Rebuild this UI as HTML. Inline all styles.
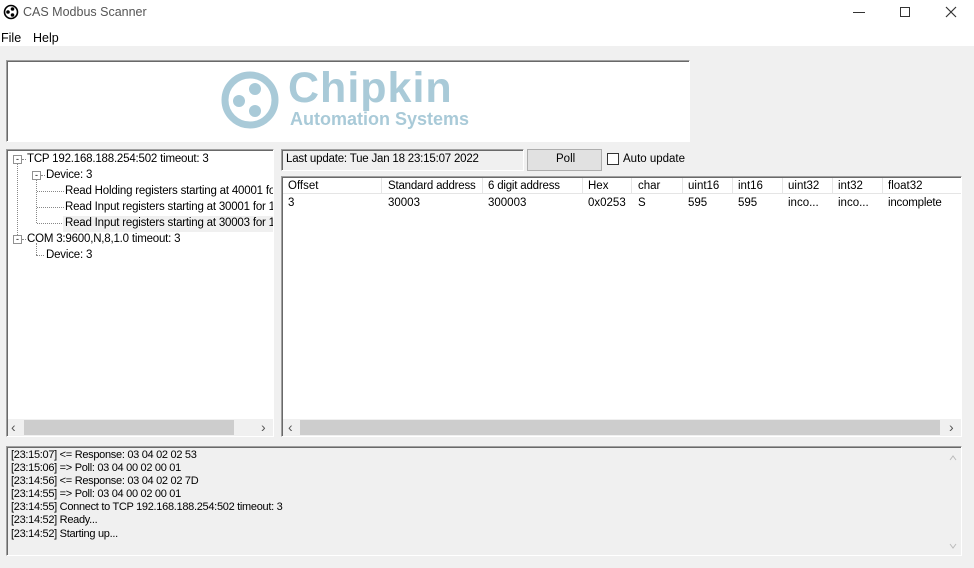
<!DOCTYPE html>
<html><head><style>
*{margin:0;padding:0;box-sizing:border-box}
body{width:974px;height:568px;background:#f0f0f0;font-family:"Liberation Sans",sans-serif;font-size:11.5px;color:#000;position:relative;overflow:hidden}
.a{position:absolute}
.sunk{border:1px solid #a0a0a0;border-right-color:#fff;border-bottom-color:#fff;box-shadow:inset 1px 1px 0 #696969}
.t{position:absolute;white-space:nowrap}
.dot{border-left:1px dotted #888}
.hd{border-top:1px dotted #888}
.box{position:absolute;width:9px;height:9px;border:1px solid #919191;background:#fff;font-size:9px;line-height:6px;text-align:center;color:#000}
.tr{letter-spacing:-0.2px}
</style></head><body>
<div class="a" style="left:0;top:0;width:974px;height:46px;background:#fff"></div>
<svg class="a" style="left:3px;top:4px" width="16" height="16" viewBox="0 0 16 16"><circle cx="8" cy="8" r="6.5" fill="none" stroke="#000" stroke-width="1.6"/><circle cx="9.5" cy="5" r="1.8"/><circle cx="5" cy="8" r="1.8"/><circle cx="9.5" cy="11" r="1.8"/></svg>
<div class="t" style="left:23px;top:5px;font-size:12.5px;color:#555">CAS Modbus Scanner</div>
<div class="a" style="left:853px;top:12px;width:12px;height:1px;background:#333"></div>
<div class="a" style="left:900px;top:7px;width:10px;height:10px;border:1px solid #333"></div>
<svg class="a" style="left:945px;top:6px" width="12" height="12" viewBox="0 0 12 12"><path d="M1 1L11 11M11 1L1 11" stroke="#333" stroke-width="1.2"/></svg>
<div class="t" style="left:1px;top:31px;font-size:12.5px">File</div>
<div class="t" style="left:33px;top:31px;font-size:12.5px">Help</div>

<div class="a sunk" style="left:6px;top:60px;width:684px;height:82px;background:#fff"></div>
<svg class="a" style="left:221px;top:71px" width="60" height="60" viewBox="0 0 60 60"><circle cx="29" cy="29" r="25" fill="none" stroke="#a9cad8" stroke-width="7"/><circle cx="34" cy="18" r="6" fill="#a9cad8"/><circle cx="18" cy="30" r="6" fill="#a9cad8"/><circle cx="34" cy="40" r="6" fill="#a9cad8"/></svg>
<div class="t" style="left:288px;top:64px;font-size:43px;font-weight:bold;color:#a9cad8;letter-spacing:1px">Chipkin</div>
<div class="t" style="left:290px;top:109px;font-size:18px;font-weight:bold;color:#a9cad8">Automation Systems</div>

<div class="a sunk" style="left:6px;top:149px;width:268px;height:288px;background:#fff"></div>
<div class="a dot" style="left:17px;top:163px;height:76px"></div>
<div class="a dot" style="left:36px;top:178px;height:45px"></div>
<div class="a hd" style="left:37px;top:191px;width:27px"></div>
<div class="a hd" style="left:37px;top:207px;width:27px"></div>
<div class="a hd" style="left:37px;top:223px;width:27px"></div>
<div class="a dot" style="left:36px;top:243px;height:12px"></div>
<div class="a hd" style="left:36px;top:255px;width:8px"></div>
<div class="a hd" style="left:22px;top:159px;width:4px"></div>
<div class="a hd" style="left:41px;top:175px;width:4px"></div>
<div class="a hd" style="left:22px;top:239px;width:4px"></div>
<div class="box" style="left:13px;top:155px">-</div>
<div class="box" style="left:32px;top:171px">-</div>
<div class="box" style="left:13px;top:235px">-</div>
<div class="t tr" style="left:27px;top:153px">TCP 192.168.188.254:502 timeout: 3</div>
<div class="t tr" style="left:46px;top:169px">Device: 3</div>
<div class="a tr" style="left:7px;top:185px;width:266px;height:48px;overflow:hidden">
<div class="t" style="left:58px;top:0px">Read Holding registers starting at 40001 for</div>
<div class="t" style="left:58px;top:16px">Read Input registers starting at 30001 for 1</div>
<div class="a" style="left:56px;top:31px;width:212px;height:16px;background:#f0f0f0"></div>
<div class="t" style="left:58px;top:32px">Read Input registers starting at 30003 for 1</div>
</div>
<div class="t tr" style="left:27px;top:233px">COM 3:9600,N,8,1.0 timeout: 3</div>
<div class="t tr" style="left:46px;top:249px">Device: 3</div>
<div class="a" style="left:8px;top:419px;width:265px;height:17px;background:#f0f0f0"></div>
<div class="a" style="left:24px;top:420px;width:210px;height:15px;background:#cdcdcd"></div>
<div class="t" style="left:11px;top:419px;color:#555;font-size:14px">&#8249;</div>
<div class="t" style="left:261px;top:419px;color:#555;font-size:14px">&#8250;</div>

<div class="a sunk" style="left:281px;top:149px;width:243px;height:22px;background:#f0f0f0"></div>
<div class="t tr" style="left:286px;top:153px">Last update: Tue Jan 18 23:15:07 2022</div>
<div class="a" style="left:527px;top:149px;width:75px;height:22px;background:#e1e1e1;border:1px solid #adadad"></div>
<div class="t" style="left:556px;top:153px">Poll</div>
<div class="a" style="left:607px;top:153px;width:12px;height:12px;background:#fff;border:1px solid #333"></div>
<div class="t" style="left:623px;top:153px">Auto update</div>

<div class="a sunk" style="left:281px;top:176px;width:681px;height:261px;background:#fff"></div>
<div class="a" style="left:283px;top:178px;width:678px;height:16px;border-bottom:1px solid #e5e5e5"></div>
<div class="a" style="left:0;top:178px;height:16px">
<div class="a" style="left:381px;height:16px;border-left:1px solid #e5e5e5"></div><div class="a" style="left:482px;height:16px;border-left:1px solid #e5e5e5"></div><div class="a" style="left:582px;height:16px;border-left:1px solid #e5e5e5"></div><div class="a" style="left:631px;height:16px;border-left:1px solid #e5e5e5"></div><div class="a" style="left:682px;height:16px;border-left:1px solid #e5e5e5"></div><div class="a" style="left:732px;height:16px;border-left:1px solid #e5e5e5"></div><div class="a" style="left:782px;height:16px;border-left:1px solid #e5e5e5"></div><div class="a" style="left:832px;height:16px;border-left:1px solid #e5e5e5"></div><div class="a" style="left:882px;height:16px;border-left:1px solid #e5e5e5"></div>
</div>
<div class="t" style="left:288px;top:180px">Offset</div><div class="t tr" style="left:388px;top:180px">Standard address</div><div class="t tr" style="left:488px;top:180px">6 digit address</div><div class="t" style="left:588px;top:180px">Hex</div><div class="t" style="left:638px;top:180px">char</div><div class="t" style="left:688px;top:180px">uint16</div><div class="t" style="left:738px;top:180px">int16</div><div class="t" style="left:788px;top:180px">uint32</div><div class="t" style="left:838px;top:180px">int32</div><div class="t" style="left:888px;top:180px">float32</div>
<div class="t" style="left:288px;top:197px">3</div><div class="t" style="left:388px;top:197px">30003</div><div class="t" style="left:488px;top:197px">300003</div><div class="t" style="left:588px;top:197px">0x0253</div><div class="t" style="left:638px;top:197px">S</div><div class="t" style="left:688px;top:197px">595</div><div class="t" style="left:738px;top:197px">595</div><div class="t" style="left:788px;top:197px">inco...</div><div class="t" style="left:838px;top:197px">inco...</div><div class="t tr" style="left:888px;top:197px">incomplete</div>
<div class="a" style="left:283px;top:419px;width:678px;height:17px;background:#f0f0f0"></div>
<div class="a" style="left:300px;top:420px;width:640px;height:15px;background:#cdcdcd"></div>
<div class="t" style="left:288px;top:419px;color:#555;font-size:14px">&#8249;</div>
<div class="t" style="left:949px;top:419px;color:#555;font-size:14px">&#8250;</div>

<div class="a sunk" style="left:6px;top:446px;width:956px;height:110px;background:#f0f0f0"></div>
<div class="a" style="left:11px;top:449px;font-size:11px;line-height:13.1px;letter-spacing:-0.3px">
[23:15:07] &lt;= Response: 03 04 02 02 53<br>[23:15:06] =&gt; Poll: 03 04 00 02 00 01<br>[23:14:56] &lt;= Response: 03 04 02 02 7D<br>[23:14:55] =&gt; Poll: 03 04 00 02 00 01<br>[23:14:55] Connect to TCP 192.168.188.254:502 timeout: 3<br>[23:14:52] Ready...<br>[23:14:52] Starting up...
</div>
<svg class="a" style="left:949px;top:455px" width="8" height="6"><path d="M1 5L4 1L7 5" fill="none" stroke="#bbb"/></svg>
<svg class="a" style="left:949px;top:543px" width="8" height="6"><path d="M1 1L4 5L7 1" fill="none" stroke="#bbb"/></svg>
</body></html>
